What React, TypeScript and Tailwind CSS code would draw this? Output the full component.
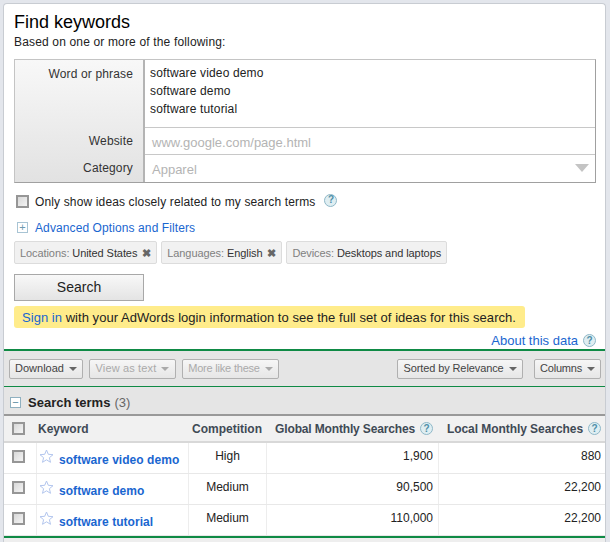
import React from "react";

const Help = ({ className = "" }: { className?: string }) => (
  <span
    className={
      "inline-flex w-[13px] h-[13px] shrink-0 items-center justify-center rounded-full border border-[#8fb8c8] bg-[#dfeef2] text-[10px] leading-none font-bold tracking-normal text-[#4f8fa8] " +
      className
    }
  >
    ?
  </span>
);

const Check = () => (
  <span className="block w-[13px] h-[13px] border-2 border-[#969696] bg-linear-to-br from-[#d8d8d8] to-[#f4f4f4]" />
);

const Caret = ({ color = "#666" }: { color?: string }) => (
  <svg width="8" height="4" viewBox="0 0 8 4" className="ml-[5px] shrink-0">
    <path d="M0 0h8L4 4z" fill={color} />
  </svg>
);

const Star = () => (
  <svg width="15" height="15" viewBox="0 0 15 15" className="shrink-0">
    <path
      d="M7.5 1l1.8 4.3 4.7.4-3.6 3 1.1 4.6-4-2.5-4 2.5 1.1-4.6-3.6-3 4.7-.4z"
      fill="#fff"
      stroke="#b3c6ee"
      strokeWidth="1"
    />
  </svg>
);

const ToolButton = ({ label, off, w }: { label: string; off?: boolean; w: string }) => (
  <div
    className={
      "flex h-[20px] items-center justify-center rounded-[2px] border border-[#b0b0b0] bg-linear-to-b from-[#f6f6f6] to-[#e6e6e6] text-[11px] whitespace-nowrap " +
      w +
      (off ? " text-[#aaaaaa]" : " text-[#444444]")
    }
  >
    {label}
    <Caret color={off ? "#aaa" : "#666"} />
  </div>
);

const Chip = ({ k, v, x }: { k: string; v: string; x?: boolean }) => (
  <div className="flex h-[23px] items-center rounded-[2px] border border-[#dcdcdc] bg-[#f1f1f1] pl-[5px] pr-[5px] pt-px text-[11px] tracking-[-0.08px] text-[#333333]">
    <span className="text-[#808080]">{k}:&nbsp;</span>
    {v}
    {x && <span className="ml-[5px] text-[11px] leading-none font-bold text-[#666666]">✖</span>}
  </div>
);

const rows = [
  { kw: "software video demo", comp: "High", g: "1,900", l: "880" },
  { kw: "software demo", comp: "Medium", g: "90,500", l: "22,200" },
  { kw: "software tutorial", comp: "Medium", g: "110,000", l: "22,200" },
];

const cols = "grid grid-cols-[32px_152px_78px_172px_169px]";

const App = () => {
  return (
    <div className="h-[542px] w-[610px] overflow-hidden bg-[#e3e6ec] pt-[3px] pl-[3px] pr-[3px] font-['Liberation_Sans',Arial,sans-serif]">
      <div className="h-[539px] w-[603px] overflow-hidden rounded-t-[4px] border-l border-t border-r border-[#c8ccd2] bg-white">
        <div className="pl-[10px] pt-[7px] pr-[9px]">
          <h1 className="text-[18px] leading-[22px] text-black">Find keywords</h1>
          <p className="mt-[2px] text-[12px] leading-[15px] tracking-[0.16px] text-[#222222]">
            Based on one or more of the following:
          </p>

          <div className="mt-[9px] flex h-[124px] w-[582px] border border-[#c4c4c4] border-r-[#a0a0a0] border-b-[#a0a0a0]">
            <div className="flex w-[130px] flex-col border-r-2 border-r-[#b4b4b4] bg-linear-to-b from-[#f8f8f8] to-[#e2e2e2] pr-[10px] text-right text-[12px] tracking-[0.15px] text-[#333333]">
              <div className="h-[67px] pt-[7px] leading-[15px]">Word or phrase</div>
              <div className="h-[27px] pt-[7px] leading-[15px]">Website</div>
              <div className="h-[28px] pt-[7px] leading-[15px]">Category</div>
            </div>
            <div className="flex flex-1 flex-col">
              <div className="h-[68px] border-b border-[#c8c8c8] pl-[5px] pt-[4px] text-[12px] leading-[18px] tracking-[0.15px] text-[#222222]">
                <div>software video demo</div>
                <div>software demo</div>
                <div>software tutorial</div>
              </div>
              <div className="h-[27px] border-b border-[#c8c8c8] pl-[7px] pt-[7px] text-[13px] leading-[16px] text-[#b4b4b4]">
                www.google.com/page.html
              </div>
              <div className="flex h-[27px] items-center justify-between pl-[7px] pr-[6px] pt-[2px] text-[13px] text-[#b4b4b4]">
                Apparel
                <svg width="14" height="8" viewBox="0 0 14 8" className="-mt-[3px]">
                  <path d="M0 0h14L7 8z" fill="#c4c4c4" />
                </svg>
              </div>
            </div>
          </div>

          <div className="mt-[11px] flex h-[15px] items-center pl-[2px] text-[12px] tracking-[0.14px] text-[#222222]">
            <Check />
            <span className="ml-[6px]">Only show ideas closely related to my search terms</span>
            <Help className="ml-[9px] -mt-[3px]" />
          </div>

          <div className="mt-[11px] flex h-[15px] items-center pl-[3px] text-[12px] tracking-[0.1px] text-[#1a66d0]">
            <span className="flex h-[11px] w-[11px] items-center justify-center border border-[#a8c4d4] text-[11px] leading-none text-[#6f9ab0]">
              +
            </span>
            <span className="ml-[7px]">Advanced Options and Filters</span>
          </div>

          <div className="mt-[6px] flex gap-[4px]">
            <Chip k="Locations" v="United States" x />
            <Chip k="Languages" v="English" x />
            <Chip k="Devices" v="Desktops and laptops" />
          </div>

          <div className="mt-[10px] flex h-[27px] w-[130px] items-center justify-center border border-[#a8a8a8] bg-linear-to-b from-[#f8f8f8] to-[#e4e4e4] text-[14px] text-[#222222]">
            Search
          </div>

          <div className="mt-[5px] flex h-[22px] w-[511px] items-center rounded-[3px] bg-[#ffec8b] pl-[8px] pt-px text-[13px] tracking-[0.04px] whitespace-nowrap text-[#222222]">
            <span className="text-[#1a66d0]">Sign in</span>&nbsp;with your AdWords login information to see the full set of ideas for this search.
          </div>

          <div className="mt-[4px] flex h-[17px] items-center justify-end text-[13px] text-[#1a66d0]">
            About this data
            <Help className="ml-[5px]" />
          </div>
        </div>

        <div className="border-t-2 border-[#0f8a45] bg-[#e5e5e5]">
          <div className="flex h-[35px] items-center justify-between pl-[5px] pr-[4px]">
            <div className="flex gap-[6px]">
              <ToolButton label="Download" w="w-[74px]" />
              <ToolButton label="View as text" off w="w-[87px] tracking-[0.15px]" />
              <ToolButton label="More like these" off w="w-[97px] tracking-[-0.2px]" />
            </div>
            <div className="flex gap-[11px]">
              <ToolButton label="Sorted by Relevance" w="w-[126px] tracking-[-0.1px]" />
              <ToolButton label="Columns" w="w-[67px] tracking-[-0.2px]" />
            </div>
          </div>
          <div className="flex h-[30px] items-center border-t border-b-2 border-t-[#0f8a45] border-b-[#999999] pl-[6px] pt-[4px] text-[13px] font-bold text-[#222222]">
            <span className="flex h-[11px] w-[11px] items-center justify-center border border-[#8fb0c0] bg-white text-[11px] leading-none font-normal text-[#5a8aa0]">
              −
            </span>
            <span className="ml-[7px]">Search terms</span>
            <span className="ml-[4px] font-normal text-[#666666]">(3)</span>
          </div>
        </div>

        <div className={cols + " h-[27px] border-b-2 border-[#d8d8d8] bg-[#f1f1f1] text-[12px] font-bold text-[#3f4a55]"}>
          <div className="flex items-center justify-center pr-[4px]">
            <Check />
          </div>
          <div className="flex items-center pl-[2px]">Keyword</div>
          <div className="flex items-center justify-center">Competition</div>
          <div className="flex items-center justify-end gap-[5px] pr-[5px] tracking-[-0.15px]">
            Global Monthly Searches <Help />
          </div>
          <div className="flex items-center justify-end gap-[5px] pr-[6px] tracking-[-0.06px]">
            Local Monthly Searches <Help />
          </div>
        </div>

        {rows.map((r) => (
          <div key={r.kw} className={cols + " h-[31px] border-b border-[#e8e8e8] text-[12px] text-[#222222]"}>
            <div className="flex items-center justify-center pb-[3px] pr-[4px]">
              <Check />
            </div>
            <div className="flex border-l border-[#ededed] pl-[2px] pt-[6px]">
              <Star />
              <a className="ml-[5px] mt-[4px] text-[12px] leading-[15px] font-bold tracking-[0.05px] text-[#1a66d0]">{r.kw}</a>
            </div>
            <div className="border-l border-[#ededed] pt-[6px] text-center leading-[15px]">{r.comp}</div>
            <div className="border-l border-[#ededed] pr-[5px] pt-[6px] text-right leading-[15px]">{r.g}</div>
            <div className="border-l border-[#ededed] pr-[6px] pt-[6px] text-right leading-[15px]">{r.l}</div>
          </div>
        ))}
        <div className="h-[10px] border-t-2 border-[#0f8a45] bg-[#eeeeee]" />
      </div>
    </div>
  );
};

export default App;
